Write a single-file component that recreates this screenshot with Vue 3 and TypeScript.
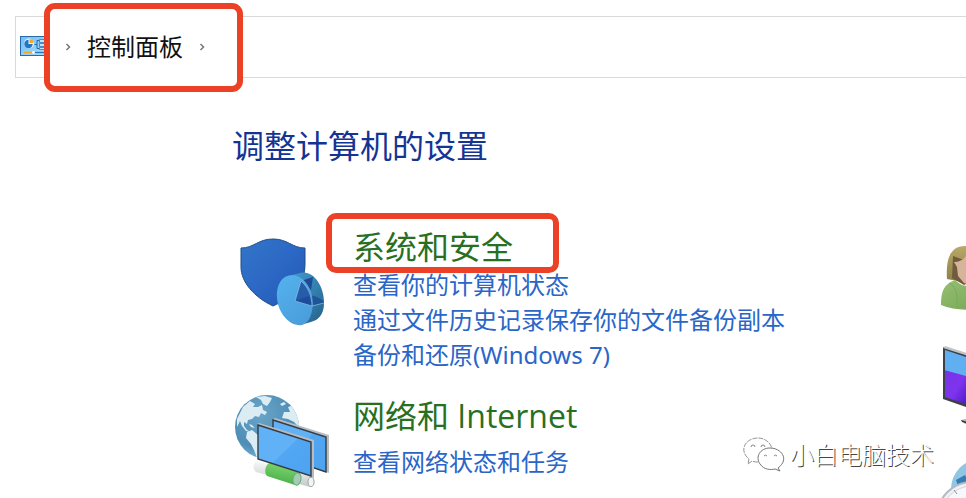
<script setup lang="ts">
interface Category {
  id: string
  title: string
  links: string[]
  marked?: boolean
}

const heading = '调整计算机的设置'

const categories: Category[] = [
  {
    id: 'security',
    title: '系统和安全',
    links: ['查看你的计算机状态', '通过文件历史记录保存你的文件备份副本', '备份和还原(Windows 7)'],
    marked: true,
  },
  {
    id: 'network',
    title: '网络和 Internet',
    links: ['查看网络状态和任务'],
  },
]
</script>

<template>
  <div class="window">
    <nav class="address" aria-label="地址栏">
      <svg class="address-icon" viewBox="0 0 30 20" aria-hidden="true">
        <defs>
          <linearGradient id="cp" x1="0" y1="0" x2="1" y2="1">
            <stop offset="0" stop-color="#6fc0f5" />
            <stop offset="1" stop-color="#a9dcfc" />
          </linearGradient>
        </defs>
        <rect x="0.5" y="0.5" width="29" height="19" fill="url(#cp)" stroke="#2a6aa8" />
        <circle cx="9" cy="7.5" r="5" fill="#e8f5ff" />
        <path d="M8.5 8V3.8A4.2 4.2 0 1 0 12.7 8Z" fill="#2277c4" />
        <path d="M9.5 7V3A4 4 0 0 1 13.5 7Z" fill="#f5a623" />
        <path d="M14.5 8.5h2.5M17 4.5v8M17 4.5h2M17 12.5h2" fill="none" stroke="#2468a8" />
        <path d="M19.5 3.5h8v3h-8zM19.5 7.5h8v3h-8zM19.5 11.5h8v2h-8z" fill="#bfe4fb" stroke="#2d79bd" stroke-width="0.8" />
        <path d="M4 16.5h9" stroke="#f5a623" stroke-width="1.4" />
        <path d="M14 16.5h12" stroke="#2b72b4" stroke-width="1.2" />
        <circle cx="13.5" cy="16.5" r="1.4" fill="#fff" />
      </svg>
      <div class="crumbs">
        <svg class="chevron" viewBox="0 0 6 8" aria-hidden="true"><path d="M1.5 1L4.5 4L1.5 7" /></svg>
        <a class="crumb" href="#">控制面板</a>
        <svg class="chevron" viewBox="0 0 6 8" aria-hidden="true"><path d="M1.5 1L4.5 4L1.5 7" /></svg>
      </div>
    </nav>

    <main class="panel">
      <section class="settings">
        <h1>{{ heading }}</h1>
        <article v-for="c in categories" :key="c.id" class="category" :class="c.id">
          <svg v-if="c.id === 'security'" class="category-icon" viewBox="0 -1 97 97" aria-hidden="true">
            <defs>
              <linearGradient id="shield" x1="0" y1="0" x2="1" y2="1">
                <stop offset="0" stop-color="#3275c7" />
                <stop offset="0.5" stop-color="#2c68c5" />
                <stop offset="1" stop-color="#2355b2" />
              </linearGradient>
              <linearGradient id="disc" x1="0" y1="0" x2="0.6" y2="1">
                <stop offset="0" stop-color="#55b2ed" />
                <stop offset="1" stop-color="#4a9fdb" />
              </linearGradient>
              <linearGradient id="rim" x1="0" y1="0" x2="1" y2="1">
                <stop offset="0" stop-color="#459bcf" />
                <stop offset="0.55" stop-color="#337fae" />
                <stop offset="1" stop-color="#255e86" />
              </linearGradient>
            </defs>
            <path d="M9 20C22 20 26 11 41 11S60 20 73 20V36C73 58 59 70 41 78C22 69 9 54 9 39Z" fill="url(#shield)" stroke="#204f88" />
            <path d="M54 48.5L70 44.5C82 43 92 58 92 75C92 87 86 92 79 94L68 97Z" fill="url(#rim)" />
            <path d="M69 53L81 49L79 62Z" fill="#1d4a91" />
            <path d="M80 78L92 75C91 71 84 68 77 67Z" fill="#1f5596" />
            <path d="M54 48.5C65 44 75 52 79 64C83 77 80 94 70 97C58 99 46 85 45 70C44 60 48 51 54 48.5Z" fill="url(#disc)" />
            <path d="M69 53L63 73L80 78C81 68 76 59 69 53Z" fill="#265ca8" />
            <path d="M63 73L77 68L80 78Z" fill="#1d4c9b" />
            <path d="M69 53L63 73L80 78L92 75M69 53C76 59 80 68 80 78" fill="none" stroke="#8dc7ef" stroke-width="0.7" />
          </svg>
          <svg v-else class="category-icon" viewBox="0 0 97 97" aria-hidden="true">
            <defs>
              <radialGradient id="globe" cx="0.4" cy="0.3" r="0.8">
                <stop offset="0" stop-color="#69a5c8" />
                <stop offset="0.65" stop-color="#4d8db6" />
                <stop offset="1" stop-color="#8ec0db" />
              </radialGradient>
              <linearGradient id="screen" x1="0" y1="0" x2="1" y2="1">
                <stop offset="0" stop-color="#62b1f8" />
                <stop offset="0.5" stop-color="#61b1f7" />
                <stop offset="0.52" stop-color="#52a6f2" />
                <stop offset="1" stop-color="#4da3f0" />
              </linearGradient>
              <linearGradient id="tube" x1="0.2" y1="0" x2="0" y2="1">
                <stop offset="0" stop-color="#fafafa" />
                <stop offset="1" stop-color="#b9bec0" />
              </linearGradient>
              <linearGradient id="sleeve" x1="0.3" y1="0" x2="0" y2="1">
                <stop offset="0" stop-color="#7bd46b" />
                <stop offset="1" stop-color="#40a744" />
              </linearGradient>
              <clipPath id="globe-clip"><circle cx="35" cy="35" r="32" /></clipPath>
            </defs>
            <circle cx="35" cy="35" r="32" fill="url(#globe)" />
            <g clip-path="url(#globe-clip)" fill="#dcecf3">
              <path d="M5 27L11 15L18 9L23 12L21 15L26 15L30 13L31 18L35 20L33 23L29 21L27 25L23 24L20 27L16 28L15 32L12 30L12 34L15 38L19 40L14 39L10 34L8 29L5 35Z" />
              <path d="M24 5L33 4L40 6L38 10L35 14L31 12L29 8Z" />
              <path d="M56 15L62 13L72 27L70 38L62 30L56 27L50 26L52 20L58 20Z" />
              <path d="M15 40L20 38L26 43L32 50V63L25 66L22 58L19 52L14 46Z" />
              <path d="M17 32L20 33L23 36L19 35ZM48 12L52 10L54 12L50 14Z" />
            </g>
            <path d="M41 27L43 26L97 43L97 81L94 80Z" fill="#b8bcbf" />
            <path d="M41 28L94 45V80L41 62Z" fill="url(#screen)" stroke="#353c43" stroke-width="1.4" />
            <path d="M25 69L80 85C84 88 83 94 78 95L24 80C20 77 21 70 25 69Z" fill="url(#tube)" />
            <ellipse cx="79" cy="90" rx="3" ry="4.6" fill="#f3f4f4" stroke="#a4a9ab" />
            <path d="M37 71L66 80C62 83 61 89 63 93L35 84C32 80 33 74 37 71Z" fill="url(#sleeve)" />
            <ellipse cx="65" cy="87" rx="4" ry="6.2" fill="#a6cbb4" stroke="#62ad74" transform="rotate(10 65 87)" />
            <path d="M25 32L27 31L82 48V86L79 85Z" fill="#b8bcbf" />
            <path d="M26 33L79 50V84L26 67Z" fill="url(#screen)" stroke="#353c43" stroke-width="1.4" />
          </svg>
          <div class="category-text">
            <h2 :class="{ marked: c.marked }"><a href="#">{{ c.title }}</a></h2>
            <ul>
              <li v-for="link in c.links" :key="link"><a href="#">{{ link }}</a></li>
            </ul>
          </div>
        </article>
      </section>

      <aside class="next-column" aria-hidden="true">
        <svg class="person" viewBox="0 0 60 66">
          <defs>
            <linearGradient id="hair" x1="0" y1="0" x2="0" y2="1">
              <stop offset="0" stop-color="#b8a969" />
              <stop offset="1" stop-color="#8f7f46" />
            </linearGradient>
            <linearGradient id="shirt" x1="0" y1="0" x2="1" y2="1">
              <stop offset="0" stop-color="#98bf74" />
              <stop offset="1" stop-color="#72a552" />
            </linearGradient>
          </defs>
          <path d="M9 34C8 18 10 1 27 1C41 1 45 12 44 34L25 37Z" fill="url(#hair)" />
          <path d="M14 33L15 11L26 15L40 33L26 40Z" fill="#705b3d" />
          <path d="M16 17C21 17 25 15 28 11L42 20L37 41L26 38L20 31L19 22Z" fill="#d5b49b" />
          <path d="M3 60C3 46 6 39 17 35C21 38 25 44 40 39C51 42 54 51 53 61C38 66 17 66 3 60Z" fill="url(#shirt)" />
          <path d="M11 38C19 42 20 52 19 63" fill="none" stroke="#7aab59" stroke-width="1" />
        </svg>
        <svg class="monitor" viewBox="0 0 72 88">
          <defs>
            <linearGradient id="violet" x1="0" y1="0" x2="1" y2="1">
              <stop offset="0" stop-color="#7434e8" />
              <stop offset="0.55" stop-color="#8033ee" />
              <stop offset="1" stop-color="#4b1ac7" />
            </linearGradient>
          </defs>
          <path d="M6 4L70 25V75L6 53Z" fill="#60aff0" />
          <path d="M6 25L28 31V61L6 53Z" fill="url(#violet)" />
          <path d="M5 2L72 24V27L7 5V52L72 74V77L5 54Z" fill="#3c4148" />
          <path d="M7 1L72 22V24L5 3Z" fill="#c0c4c7" />
          <path d="M23 75L35 72V78L27 79Z" fill="#b8bcbf" />
          <path d="M23 75L40 80V82L24 77Z" fill="#34383c" />
        </svg>
        <svg class="clock" viewBox="0 0 80 80">
          <circle cx="43" cy="29" r="30" fill="#8fc5e5" />
          <path d="M18 20L27 15L31 23L20 26Z" fill="#337eb2" />
          <circle cx="34" cy="57" r="35" fill="#f0f1f6" stroke="#b4b9c4" stroke-width="2" />
          <circle cx="34" cy="57" r="31" fill="#f7f8fb" stroke="#d1d5dd" />
          <path d="M16 30L19 34M8 40L11 43M32 28V31" stroke="#8c919b" />
        </svg>
      </aside>
    </main>

    <div class="watermark">
      <svg class="wechat" viewBox="0 0 42 36" aria-hidden="true">
        <g fill="#fff" stroke-linejoin="round">
          <path d="M15 25C13 25 11 25 9 24L5 27L6 22C-5 13 3 1 15 1C22 1 28 6 29 12" stroke="#777" stroke-width="0.8" stroke-dasharray="5 1" />
          <path d="M35 31C47 22 38 11 27 11C17 11 12 20 17 27C21 33 28 33 32 32L37 34Z" stroke="#666" stroke-width="0.9" />
        </g>
        <path d="M8 10A2 2 0 1 1 12 10M18 10A2 2 0 1 1 22 10M21 19A2 2 0 0 1 24 19M31 19A2 2 0 0 1 34 19" fill="none" stroke="#777" stroke-width="0.9" />
      </svg>
      <span>小白电脑技术</span>
    </div>
  </div>
</template>

<style>
body {
  background: #fff;
}
</style>

<style scoped>
.window {
  position: relative;
  height: 100vh;
  box-sizing: border-box;
  padding-top: 16px;
  overflow: hidden;
  font-family: "Open Sans", "Noto Sans CJK SC", sans-serif;
  font-weight: 400;
}

a {
  color: inherit;
  text-decoration: none;
}

.address {
  display: flex;
  align-items: center;
  box-sizing: border-box;
  height: 62px;
  margin-left: 15px;
  padding-left: 4px;
  border: 1px solid #d9d9d9;
  border-right: 0;
}

.address-icon {
  width: 30px;
  height: 20px;
  margin-bottom: 2px;
}

.crumbs {
  position: relative;
  display: flex;
  align-items: center;
  gap: 16px;
  padding-left: 15px;
}

.crumbs::after {
  content: "";
  position: absolute;
  inset: -26px -38px -27px -6px;
  border: 6px solid #ec4127;
  border-radius: 11px;
  background: #fff;
}

.crumbs > * {
  position: relative;
  z-index: 1;
}

.chevron {
  width: 6px;
  height: 8px;
  fill: none;
  stroke: #777;
  stroke-width: 1.5;
}

.crumb {
  color: #111;
  font-size: 24px;
  line-height: 36px;
}

.panel {
  display: grid;
  grid-template-columns: 1fr 28px;
  padding-left: 232px;
}

h1 {
  margin: 47px 0 60px;
  color: #143493;
  font-size: 32px;
  font-weight: 400;
  line-height: 42px;
}

.category {
  display: flex;
  align-items: flex-start;
  gap: 24px;
  margin-bottom: 24px;
}

.category-icon {
  flex: none;
  width: 97px;
  height: 97px;
  overflow: visible;
}

.network .category-icon {
  margin-top: -4px;
}

h2 {
  position: relative;
  width: fit-content;
  margin: 0;
  color: #28701f;
  font-size: 32px;
  font-weight: 400;
  line-height: 40px;
}

.marked::after {
  content: "";
  position: absolute;
  inset: -14px -46px -6px -27px;
  border: 6px solid #ec4127;
  border-radius: 10px;
  pointer-events: none;
}

.network ul {
  padding-top: 8px;
}

ul {
  margin: 0;
  padding: 0;
  list-style: none;
  color: #2a66c8;
  font-family: "Noto Sans", "Noto Sans CJK SC", sans-serif;
  font-size: 24px;
  line-height: 35px;
}

.next-column {
  display: flex;
  flex-direction: column;
  padding-top: 167px;
  overflow: hidden;
}

.next-column svg {
  flex: none;
}

.person {
  width: 60px;
  height: 66px;
}

.monitor {
  width: 72px;
  height: 88px;
  margin-top: 34px;
}

.clock {
  width: 80px;
  height: 80px;
  margin-top: 27px;
}

.watermark {
  position: absolute;
  right: 32px;
  bottom: 25px;
  display: flex;
  align-items: center;
  gap: 5px;
  color: #fff;
  font-size: 24px;
  font-weight: 300;
  line-height: 36px;
  text-shadow: 1px 1px 0 #444;
}

.wechat {
  width: 42px;
  height: 36px;
}
</style>
